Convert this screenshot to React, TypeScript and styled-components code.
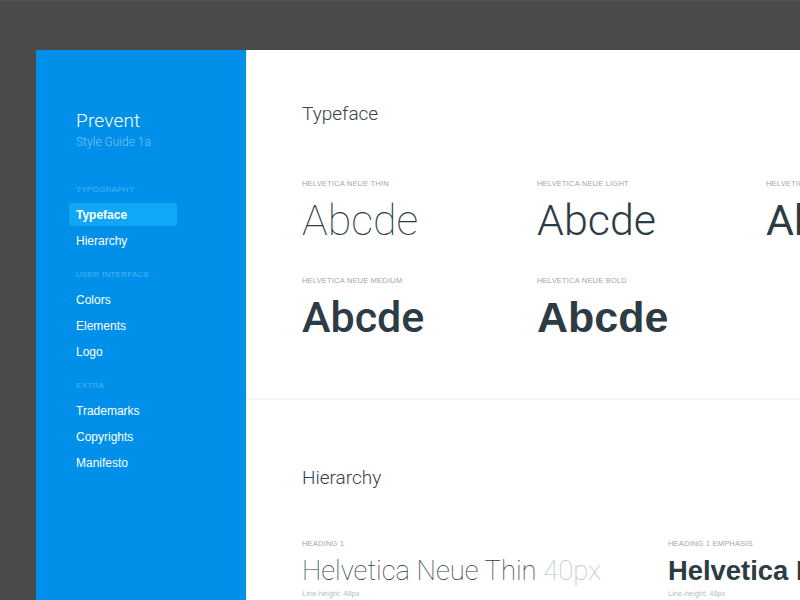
import React from "react";
import styled, { createGlobalStyle } from "styled-components";

const Global = createGlobalStyle`
  html, body { margin: 0; padding: 0; }
  body {
    background: #4a4a4a;
    font-family: "Liberation Sans", Arial, sans-serif;
    -webkit-font-smoothing: antialiased;
  }
`;

const Page = styled.div`
  height: 600px;
  overflow: hidden;
  padding: 49px 0 0 36px;
  box-sizing: border-box;
  border-top: 1px solid #555;
`;

const Frame = styled.div`
  display: flex;
  height: 600px;
  width: 1000px;
`;

const Sidebar = styled.aside`
  width: 210px;
  flex: none;
  background: #0090e9;
  padding: 59px 0 0 33px;
  box-sizing: border-box;
`;

const Brand = styled.div`
  padding-left: 7px;
  margin-bottom: 35px;
`;

const BrandName = styled.div`
  font-family: "Roboto", "Liberation Sans", sans-serif;
  font-weight: 300;
  font-size: 19px;
  line-height: 24px;
  color: #ffffff;
  letter-spacing: 0.2px;
`;

const BrandSub = styled.div`
  font-family: "Roboto", sans-serif;
  font-weight: 300;
  font-size: 12px;
  line-height: 16px;
  color: #7dc4f3;
  margin-top: 1px;
`;

const NavGroup = styled.div`
  display: flex;
  flex-direction: column;
  margin-bottom: 15px;
`;

const GroupLabel = styled.div`
  font-size: 8px;
  line-height: 10px;
  letter-spacing: 0.3px;
  text-transform: uppercase;
  color: #52b2f2;
  padding-left: 7px;
  margin-bottom: 8px;
`;

const NavItem = styled.div<{ $active?: boolean }>`
  width: 108px;
  height: 23px;
  box-sizing: border-box;
  padding-left: 7px;
  display: flex;
  align-items: center;
  border-radius: 3px;
  margin-bottom: 3px;
  font-size: 12px;
  color: #ffffff;
  font-weight: ${(p) => (p.$active ? 700 : 400)};
  background: ${(p) => (p.$active ? "#10a8f6" : "transparent")};
`;

const Main = styled.main`
  flex: 1;
  background: #ffffff;
  border-left: 1px solid #eef0f1;
`;

const Section = styled.section<{ $divider?: boolean }>`
  padding: 52px 0 0 55px;
  border-bottom: ${(p) => (p.$divider ? "2px solid #f4f5f6" : "none")};
  box-sizing: border-box;
`;

const TypeSection = styled(Section)`
  height: 350px;
`;

const Title = styled.h2`
  margin: 0;
  font-family: "Roboto", sans-serif;
  font-weight: 300;
  font-size: 19px;
  line-height: 24px;
  color: #35424a;
`;

const TypeGrid = styled.div`
  display: grid;
  grid-template-columns: 235px 229px 235px;
  row-gap: 31px;
  margin-top: 53px;
`;

const Sample = styled.div`
  display: flex;
  flex-direction: column;
`;

const Label = styled.div`
  font-size: 7.5px;
  line-height: 10px;
  letter-spacing: 0.2px;
  text-transform: uppercase;
  color: #9aa8b1;
`;

const specimenFont = (w: number) =>
  w >= 700 ? '"Liberation Sans", Arial' : '"Roboto"';

const Specimen = styled.div<{ $weight: number }>`
  font-family: ${(p) => specimenFont(p.$weight)}, sans-serif;
  font-weight: ${(p) => p.$weight};
  font-size: 43px;
  line-height: 50px;
  color: #2d3b44;
  margin-top: 6px;
  white-space: nowrap;
`;

const HierSection = styled(Section)`
  padding-top: 66px;
`;

const HierGrid = styled.div`
  display: grid;
  grid-template-columns: 366px 366px;
  margin-top: 49px;
`;

const Heading = styled.div<{ $bold?: boolean }>`
  font-family: ${(p) => (p.$bold ? '"Liberation Sans", Arial' : '"Roboto"')}, sans-serif;
  font-weight: ${(p) => (p.$bold ? 700 : 100)};
  font-size: 27.4px;
  line-height: 34px;
  color: #2d3b44;
  margin-top: 5px;
  white-space: nowrap;
`;

const Muted = styled.span`
  color: #b7c3ca;
`;

const Note = styled.div`
  font-size: 7.5px;
  line-height: 10px;
  color: #b3bec5;
  margin-top: 1px;
`;

const nav = [
  { label: "Typography", items: ["Typeface", "Hierarchy"] },
  { label: "User Interface", items: ["Colors", "Elements", "Logo"] },
  { label: "Extra", items: ["Trademarks", "Copyrights", "Manifesto"] },
];

const faces = [
  { name: "Helvetica Neue Thin", w: 100 },
  { name: "Helvetica Neue Light", w: 300 },
  { name: "Helvetica Neue Regular", w: 400 },
  { name: "Helvetica Neue Medium", w: 500 },
  { name: "Helvetica Neue Bold", w: 700 },
];

export default function App() {
  return (
    <>
      <Global />
      <Page>
        <Frame>
          <Sidebar>
            <Brand>
              <BrandName>Prevent</BrandName>
              <BrandSub>Style Guide 1a</BrandSub>
            </Brand>
            {nav.map((g) => (
              <NavGroup key={g.label}>
                <GroupLabel>{g.label}</GroupLabel>
                {g.items.map((it) => (
                  <NavItem key={it} $active={it === "Typeface"}>
                    {it}
                  </NavItem>
                ))}
              </NavGroup>
            ))}
          </Sidebar>
          <Main>
            <TypeSection $divider>
              <Title>Typeface</Title>
              <TypeGrid>
                {faces.map((f) => (
                  <Sample key={f.name}>
                    <Label>{f.name}</Label>
                    <Specimen $weight={f.w}>Abcde</Specimen>
                  </Sample>
                ))}
              </TypeGrid>
            </TypeSection>
            <HierSection>
              <Title>Hierarchy</Title>
              <HierGrid>
                <Sample>
                  <Label>Heading 1</Label>
                  <Heading>
                    Helvetica Neue Thin <Muted>40px</Muted>
                  </Heading>
                  <Note>Line-height: 48px</Note>
                </Sample>
                <Sample>
                  <Label>Heading 1 Emphasis</Label>
                  <Heading $bold>Helvetica Neue Bold</Heading>
                  <Note>Line-height: 48px</Note>
                </Sample>
              </HierGrid>
            </HierSection>
          </Main>
        </Frame>
      </Page>
    </>
  );
}
